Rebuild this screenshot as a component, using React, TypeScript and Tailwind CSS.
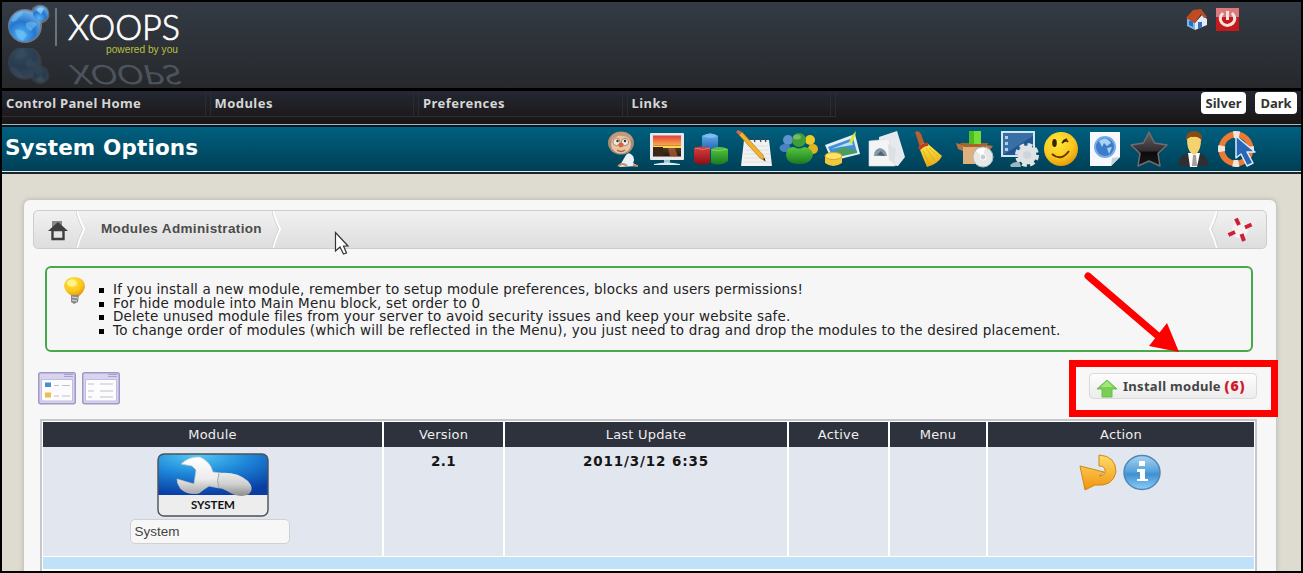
import type { ReactNode } from "react";

const Ico = ({ children, s = 36 }: { children: ReactNode; s?: number }) => (
  <svg width={s} height={s} viewBox="0 0 36 36" className="shrink-0 overflow-visible">{children}</svg>
);

const Defs = () => (
  <svg width="0" height="0" className="absolute">
    <defs>
      <radialGradient id="ball" cx=".4" cy=".8" r=".8"><stop offset="0" stopColor="#54b6f5" /><stop offset=".55" stopColor="#2576cf" /><stop offset="1" stopColor="#6fb2ea" /></radialGradient>
      <linearGradient id="sunset" x2="0" y2="1"><stop offset="0" stopColor="#e0403c" /><stop offset=".45" stopColor="#fba44a" /><stop offset=".55" stopColor="#5a3a1c" /><stop offset="1" stopColor="#1c1c18" /></linearGradient>
      <linearGradient id="blue" x2="0" y2="1"><stop offset="0" stopColor="#6cb4ee" /><stop offset="1" stopColor="#2263b4" /></linearGradient>
      <linearGradient id="red" x2="0" y2="1"><stop offset="0" stopColor="#d84040" /><stop offset="1" stopColor="#8c0d14" /></linearGradient>
      <linearGradient id="green" x2="0" y2="1"><stop offset="0" stopColor="#58c83c" /><stop offset="1" stopColor="#187a22" /></linearGradient>
      <linearGradient id="yel" x2="0" y2="1"><stop offset="0" stopColor="#fff04c" /><stop offset="1" stopColor="#e8a410" /></linearGradient>
      <radialGradient id="face" cx=".4" cy=".3" r=".8"><stop offset="0" stopColor="#ffe83c" /><stop offset=".6" stopColor="#fbc41c" /><stop offset="1" stopColor="#d88a08" /></radialGradient>
      <linearGradient id="star" x2="0" y2="1"><stop offset="0" stopColor="#6a6264" /><stop offset=".55" stopColor="#332c30" /><stop offset=".6" stopColor="#0c0a0c" /><stop offset="1" stopColor="#1c181a" /></linearGradient>
      <linearGradient id="gold" x2="0" y2="1"><stop offset="0" stopColor="#ffdc6c" /><stop offset="1" stopColor="#f0940c" /></linearGradient>
      <linearGradient id="info" x2="0" y2="1"><stop offset="0" stopColor="#a8d4f4" /><stop offset=".45" stopColor="#5aa4dc" /><stop offset=".55" stopColor="#3f90d2" /><stop offset="1" stopColor="#8ecdf8" /></linearGradient>
      <radialGradient id="sys" cx=".35" cy="0" r="1"><stop offset="0" stopColor="#55cdf5" /><stop offset=".5" stopColor="#1d86d8" /><stop offset="1" stopColor="#0a3ea4" /></radialGradient>
      <linearGradient id="steel" x2="0" y2="1"><stop offset="0" stopColor="#fff" /><stop offset=".6" stopColor="#ececec" /><stop offset="1" stopColor="#aaa" /></linearGradient>
      <linearGradient id="grip" x2="0" y2="1"><stop offset="0" stopColor="#ececec" /><stop offset=".5" stopColor="#cfcfcf" /><stop offset="1" stopColor="#8c8c8c" /></linearGradient>
    </defs>
  </svg>
);

const Person = () => (
  <Ico>
    <ellipse cx="16" cy="12" rx="13" ry="11.500" fill="#a98a72" />
    <ellipse cx="16" cy="13" rx="10" ry="9.500" fill="#e8c4a4" />
    <path d="M4 10Q7 0 18 1Q27 2 28 10Q21 4 13 5Z" fill="#c49a78" />
    <circle cx="11.500" cy="11" r="3.600" fill="#efe9df" stroke="#a98672" /><circle cx="20" cy="11" r="3.600" fill="#efe9df" stroke="#a98672" />
    <circle cx="12.500" cy="10" r="1.200" fill="#333" /><circle cx="20" cy="10" r="1.200" fill="#333" />
    <ellipse cx="16" cy="14" rx="2.600" ry="2.300" fill="#d8633a" /><path d="M12 19q4 3 8 0" stroke="#9a6a50" fill="none" strokeWidth="1.500" />
    <path d="M14 36Q18 29 21 24Q24 20 28 25Q30 29 28 32L33 35Z" fill="#e9f0f8" /><path d="M13 35Q18 31 22 35M28 34L33 35" stroke="#c49064" strokeWidth="2" fill="none" />
  </Ico>
);
const Monitor = () => (
  <Ico>
    <rect x="1" y="2" width="34" height="27" rx="1" fill="#e6eaee" />
    <rect x="4" y="4.500" width="28" height="21" fill="url(#sunset)" /><path d="M4 15h28v2H4z" fill="#f7dc4e" /><path d="M4 16h10v9H4z" fill="#3a2816" />
    <path d="M19 17h7l3 9h-8z" fill="#c9683a" opacity=".6" /><path d="M15 29h6v3h-6z" fill="#9fc0d2" /><path d="M5 33q13-3 26 0v1H5z" fill="#dfe8ee" />
  </Ico>
);
const Cubes = () => (
  <Ico>
    <path d="M9 5q9-5 16 0v14H9z" fill="url(#blue)" /><path d="M9 5q8 4 16 0q-8-5-16 0" fill="#7cbcf2" />
    <path d="M1 17q8-3 16 0v15q-9 4-16-1z" fill="url(#red)" /><path d="M18 18q9-4 17 0v12q-8 6-17 2z" fill="url(#green)" />
    <path d="M2 17q7 3 15 0M19 19q8 2 15-1" stroke="#fff" opacity=".3" fill="none" />
  </Ico>
);
const Notes = () => (
  <Ico>
    <path d="M8 9h25l3 26H5z" fill="#f1f1f0" /><path d="M10 15h22M9 19h24M8 23h26M8 27h26M7 31h28" stroke="#d4d8dc" strokeWidth=".7" />
    <path d="M13 11q-2-5 1-5M19 11q-2-5 1-5M25 11q-2-5 1-5M30 11q-2-5 1-5" stroke="#34495c" fill="none" strokeWidth="1.300" />
    <path d="M3 4L24 27L29 30L27 24L6 1Z" fill="#f3b12c" stroke="#a4701c" strokeWidth=".6" /><path d="M3 4L0 1L2-1L6 1Z" fill="#d36a50" /><path d="M27 28L29.500 30.500L28.500 27Z" fill="#222" />
  </Ico>
);
const Group = () => (
  <Ico>
    <circle cx="8" cy="9" r="5" fill="#5d94ce" /><ellipse cx="5" cy="17" rx="5.500" ry="4" fill="#4c82c2" />
    <circle cx="30" cy="9" r="5" fill="#ecca28" /><ellipse cx="33" cy="18" rx="5" ry="5" fill="#e2b420" />
    <circle cx="19" cy="9" r="7" fill="#3f9f34" /><path d="M6 23q1-7 8-7q5 3 10 0q8 1 9 7q-1 10-14 10T6 23" fill="url(#green)" /><ellipse cx="17" cy="6" rx="4" ry="2.500" fill="#fff" opacity=".28" />
  </Ico>
);
const Photo = () => (
  <Ico>
    <path d="M1 14L31 3L36 23L8 30Z" fill="#e6eef4" /><path d="M4 16L29 7L33 21L9 27Z" fill="#4290d4" /><path d="M6 24L19 16L33 20V22L9 27Z" fill="#4a9c60" /><path d="M7 18L28 10L29 14L16 16Z" fill="#b7e0f4" />
    <path d="M25 12Q27 5 32 0Q31 8 27 13Z" fill="#d8e83c" />
    <path d="M1 25v7q8 6 17 0v-7z" fill="#f1c83c" /><ellipse cx="9.500" cy="25" rx="8.500" ry="3.500" fill="#fbe36a" stroke="#d9a623" />
  </Ico>
);
const Papers = () => (
  <Ico>
    <path d="M11 6L29 0L37 26L30 35L12 33Z" fill="#e6eaee" /><path d="M1 10L21 8L27 35H1Z" fill="#f4f4f4" stroke="#d4dade" strokeWidth=".6" /><path d="M20 13l8 5l-2 15l-5-4z" fill="#dde1e4" />
    <path d="M6 25q0-7 6-8q6 1 7 8z" fill="#8298a8" /><path d="M9 24l4-4l4 5z" fill="#4c6274" />
  </Ico>
);
const Broom = () => (
  <Ico>
    <path d="M3 1q4-2 6 2l4 11l-5 2z" fill="#ba622c" /><path d="M7 16q5-6 9-3l14 12q-4 8-15 11Q11 27 7 16" fill="url(#yel)" />
    <path d="M7 18q3-4 9-5" stroke="#bd3f23" strokeWidth="3.500" fill="none" /><path d="M11 19l6 14M14 17l9 13M17 17l10 9" stroke="#d8a41c" strokeWidth=".7" fill="none" />
  </Ico>
);
const Package = () => (
  <Ico>
    <path d="M7 14h24v19H7z" fill="#deb07c" /><path d="M0 12l7 2v6l-5-2zM31 14l6 1l-4 5h-3z" fill="#b9733c" /><path d="M4 12h28l-2 4H8z" fill="#a8642e" />
    <path d="M13 0h12v13H13z" fill="#74dc34" /><path d="M13 0h5v13h-5z" fill="#4cbc24" />
    <circle cx="27" cy="26" r="10" fill="#e6e8e8" stroke="#b4b8ba" /><path d="M27 26L20 20A9 9 0 0 1 29 17Z" fill="#fff" /><circle cx="27" cy="26" r="3" fill="#c6cccf" stroke="#fff" />
  </Ico>
);
const Settings = () => (
  <Ico>
    <rect x="1" y="0" width="34" height="26" fill="#d5e4ee" /><rect x="3" y="2" width="30" height="22" fill="#1f5790" /><path d="M3 24L33 5V2H3Z" fill="#386fa4" />
    <path d="M5 5h3v3H5zM5 11h3v3H5zM5 17h3v3H5z" fill="#b3d0e4" />
    <circle cx="27" cy="24" r="9.500" fill="#e0e3e5" stroke="#e0e3e5" strokeWidth="5" strokeDasharray="4.500 3" /><circle cx="27" cy="24" r="4" fill="#cfd6da" /><path d="M10 34q5-5 10-2l1 4H11z" fill="#9fb4be" />
  </Ico>
);
const Smile = () => (
  <Ico>
    <circle cx="18" cy="18" r="17" fill="url(#face)" /><ellipse cx="11.500" cy="12" rx="2.300" ry="4" fill="#3a2404" /><path d="M19 12q4-4 6-1M20 10l4-2" stroke="#3a2404" strokeWidth="1.800" fill="none" />
    <path d="M9 23q9 8 17-3" stroke="#5b3a08" strokeWidth="2" fill="none" />
  </Ico>
);
const Page = () => (
  <Ico>
    <path d="M3 1H33V26L24 35H3Z" fill="#f6f8fb" /><path d="M24 35L25 27L33 26Z" fill="#c9d2da" /><circle cx="18" cy="16" r="11" fill="#76aee4" /><circle cx="18" cy="16" r="9" fill="#3c7cca" />
    <path d="M12 10q7-6 12 2l-4 3l-3-3l-2 4zM20 17l5-1l-3 7z" fill="#a9d2f4" />
  </Ico>
);
const Star = () => (
  <Ico>
    <path d="M18 1L23.500 12L36 14L27 22.500L29 35L18 30L7 35L9 22.500L0 14L12.500 12Z" fill="url(#star)" stroke="#6f6d72" strokeLinejoin="round" strokeWidth="1.500" />
  </Ico>
);
const Suit = () => (
  <Ico>
    <path d="M3 35Q3 24 14 22H24Q33 24 33 35Z" fill="#2f2e31" /><path d="M13 22h12l-3 14h-7z" fill="#fff" /><path d="M18 24h3l1 11h-5z" fill="#a29f98" />
    <path d="M12 8q7-6 14 0q0 10-4 14q-3 3-6 0q-4-4-4-14" fill="#f6d26c" /><path d="M11 10Q10 1 18 0Q28 0 27 10Q24 5 18 6Q13 5 11 10" fill="#8a4a14" />
  </Ico>
);
const Help = () => (
  <Ico>
    <circle cx="17" cy="18" r="14.500" fill="none" stroke="#ec7a34" strokeWidth="6" /><circle cx="17" cy="18" r="14.500" fill="none" stroke="#f1e6de" strokeWidth="7" strokeDasharray="6 16.770" strokeDashoffset="3" />
    <path d="M17 5V27L22 23L28 35L34 32L28 21H36Z" fill="#2766b8" stroke="#dfecf8" strokeWidth="1.500" strokeLinejoin="round" />
  </Ico>
);

const tools = [Person, Monitor, Cubes, Notes, Group, Photo, Papers, Broom, Package, Settings, Smile, Page, Star, Suit, Help];

const Globe = () => (
  <svg width="46" height="42" viewBox="0 0 46 42">
    <circle cx="19" cy="23" r="17" fill="#a9b3bf" opacity=".55" /><circle cx="34" cy="11" r="9.500" fill="#8793a2" opacity=".6" />
    <circle cx="18.500" cy="23" r="15.500" fill="url(#ball)" /><path d="M5 18q4-9 12-10q0 5-5 7q-2 5-7 3M20 20q7-3 11 1l-6 7q-6-2-5-8M9 27q7-2 12 5l-4 6q-7-2-8-11" fill="#7fcbf8" opacity=".5" />
    <circle cx="34.500" cy="10.500" r="7.500" fill="url(#ball)" /><path d="M30 7q4-5 8-1l-3 5z" fill="#a9def9" opacity=".7" />
  </svg>
);

const Chevron = ({ flip = false }: { flip?: boolean }) => (
  <svg width="10" height="37" viewBox="0 0 10 37" className={flip ? "-scale-x-100" : ""}>
    <path d="M1 0Q2 6 8 18Q3 28 1 37" fill="none" stroke="#fff" strokeWidth="2" /><path d="M0 0Q1 6 6.500 18Q2 28 0 37" fill="none" stroke="#cfcfcf" strokeWidth=".8" />
  </svg>
);

const ViewIcon = ({ plain = false }: { plain?: boolean }) => (
  <svg width="38" height="33" viewBox="0 0 38 33">
    <rect x=".75" y=".75" width="36.500" height="31" rx="2" fill="#d9d4ee" stroke="#9f97c6" strokeWidth="1.500" />
    <path d="M26 2.500h9M26 4.500h9" stroke="#a79fd0" /><rect x="3.500" y="7.500" width="31" height="21.500" fill="#fcfcfe" stroke="#c3bddf" />
    {plain ? <path d="M6 12h6M18 12h13M6 19h6M18 19h13M6 25h4M18 25h13" stroke="#c2c2c8" strokeWidth="1.200" /> : <>
      <rect x="7" y="10.500" width="6" height="4.500" fill="#4a8fd0" /><rect x="7" y="20.500" width="6" height="5" fill="#eebf48" /><path d="M16 13.500h5M24 13.500h8M16 24h5M24 24h8" stroke="#c0c0c6" strokeWidth="1.200" /></>}
  </svg>
);

const nav = ["Control Panel Home", "Modules", "Preferences", "Links"];
const tips = [
  "If you install a new module, remember to setup module preferences, blocks and users permissions!",
  "For hide module into Main Menu block, set order to 0",
  "Delete unused module files from your server to avoid security issues and keep your website safe.",
  "To change order of modules (which will be reflected in the Menu), you just need to drag and drop the modules to the desired placement.",
];
const heads = ["Module", "Version", "Last Update", "Active", "Menu", "Action"];
const cols = "grid grid-cols-[339px_119px_282px_99px_96px_266px] gap-x-[2px]";

export default function App() {
  return (
    <div className="relative flex h-[573px] w-[1303px] flex-col overflow-hidden border-2 border-black bg-[#dedbd0] font-['DejaVu_Sans',sans-serif]">
      <Defs />
      <header className="flex h-[86px] shrink-0 justify-between bg-linear-to-b from-[#343b45] to-[#26282b]">
        <div className="flex pl-[4px] pt-[1px]">
          <div className="w-[49px]">
            <Globe />
            <div className="mt-[3px] h-[38px] overflow-hidden opacity-20"><div className="h-[38px] -scale-y-100"><Globe /></div></div>
          </div>
          <div className="mt-[5px] h-[38px] w-[2px] bg-[#6b737d]" />
          <svg width="125" height="84" viewBox="0 0 125 84" className="ml-[9px] overflow-visible">
            <text x="2" y="37" textLength="112" lengthAdjust="spacingAndGlyphs" fontSize="36" fontWeight="300" stroke="#fff" strokeWidth=".7" fontFamily="Lato, sans-serif" fill="#fff">XOOPS</text>
            <text x="40" y="50" textLength="72" lengthAdjust="spacingAndGlyphs" fontSize="10" fontFamily="Liberation Sans, sans-serif" fill="#b9c03e">powered by you</text>
            <text x="2" y="0" transform="translate(0 62) skewX(14) scale(1 -.75)" textLength="111" lengthAdjust="spacingAndGlyphs" fontSize="36" fontFamily="Lato, sans-serif" fill="#59616b" opacity=".75">XOOPS</text>
          </svg>
        </div>
        <div className="flex gap-[8px] pr-[62px] pt-[6px]">
          <svg width="23" height="23" viewBox="0 0 23 23"><path d="M2 10L10 15V22L2 18Z" fill="#79b7ec" /><path d="M10 15L17 7L22 11V17L10 22Z" fill="#e0ecf8" /><path d="M1 10L8 2L16 1L22 9L19 10L16 6L10 15Z" fill="#c24a20" /><path d="M4 13h4v6l-4-2z" fill="#246fc0" /><path d="M13 14h4v5l-4 2z" fill="#386db8" /></svg>
          <svg width="23" height="23" viewBox="0 0 23 23"><rect width="23" height="23" fill="#c41a1c" /><rect width="23" height="9" fill="#dc797a" /><path d="M7 5Q2 10 6 15Q11 20 17 15Q21 10 16 5M11.500 3V12" stroke="#f7e3e3" strokeWidth="3" fill="none" /></svg>
        </div>
      </header>
      <nav className="flex h-[36px] shrink-0 justify-between border-t-[3px] border-black bg-linear-to-b from-[#242832] to-[#1a1515]">
        <div className="flex h-[26px]">
          {nav.map((n, i) => (
            <div key={n} className="flex w-[208.500px] items-center justify-between border-b border-[#2a2d33] pl-[4px] font-['Noto_Sans','DejaVu_Sans',sans-serif] text-[13px] font-bold text-[#d6d6d6]">
              <span className={i === 0 ? "pt-px tracking-[.32px]" : "pt-px tracking-[.45px]"}>{n}</span><i className="h-full w-[6px] border-x border-[#292c33]" />
            </div>
          ))}
        </div>
        <div className="flex gap-[9px] pr-[4px] pt-[1px] font-['Noto_Sans',sans-serif] text-[13px] font-bold leading-[22px] text-[#333]">
          <span className="h-[22px] w-[45px] rounded-[4px] bg-white text-center">Silver</span>
          <span className="h-[22px] w-[42px] rounded-[4px] bg-white text-center">Dark</span>
        </div>
      </nav>
      <div className="h-[1px] shrink-0 bg-[#a7b6bd]" />
      <section className="flex h-[46px] shrink-0 items-center border-t-2 border-[#051620] bg-linear-to-b from-[#00607f] to-[#004057]">
        <h1 className="-mt-[3px] w-[599px] pl-[3px] text-[21.500px] font-bold leading-none tracking-[.14px] text-white">System Options</h1>
        <div className="flex">
          {tools.map((T, i) => <div key={i} className="flex w-[43.850px] justify-center"><T /></div>)}
        </div>
      </section>
      <div className="h-[3px] shrink-0 border-b-2 border-b-[#17242a] bg-[#e6e9e8]" />

      <main className="ml-[21px] mt-[25px] flex w-[1254px] flex-1 flex-col rounded-t-[7px] border border-[#c9c8c4] bg-[#f7f7f8] px-[9px] pt-[10px] shadow-[0_0_4px_#bdbbb3]">
        <div className="flex h-[39px] shrink-0 items-center rounded-[5px] border border-[#cdcdcd] bg-linear-to-b from-[#f1f1f1] to-[#dedede] font-['Liberation_Sans',sans-serif]">
          <svg width="20" height="20" viewBox="0 0 20 20" className="ml-[14px] mr-[8px] mt-[2px]"><path d="M4 0h10v6H4z" fill="#888" /><path d="M10 1L0 10H20Z" fill="#3e3e3e" /><path d="M4.500 9h11v9h-11z" fill="#e4e4e4" stroke="#3e3e3e" strokeWidth="2.400" /></svg>
          <Chevron />
          <span className="ml-[15px] w-[171px] text-[13.500px] font-bold tracking-[.35px] text-[#4b4b4b]">Modules Administration</span>
          <Chevron />
          <div className="flex-1" />
          <Chevron flip />
          <svg width="26" height="26" viewBox="0 0 26 26" className="ml-[9px] mr-[13px]"><circle cx="13" cy="13" r="8" fill="#f6f2f2" /><path d="M9 1.500L12 8M24.500 7.500L18 10.500M17 24L14.500 17M1.500 18L8 15" stroke="#cb2039" strokeWidth="4" /></svg>
        </div>
        <div className="ml-[12px] mt-[17px] flex h-[86px] w-[1208px] shrink-0 rounded-[6px] border-2 border-[#46a94b] bg-[#f6f6f7] pl-[17px] pt-[9px]">
          <svg width="22" height="28" viewBox="0 0 22 28"><path d="M0 9Q1 0 11 0Q21 1 21 10Q20 15 15 19H8Q1 15 0 9" fill="url(#face)" /><ellipse cx="8" cy="6" rx="5" ry="3.500" fill="#fff8a8" opacity=".8" /><path d="M7 18h8l-1 7l-4 2l-3-2z" fill="#8a8a8a" /><path d="M8 20l6 1M8 23l5 1" stroke="#ddd" /></svg>
          <ul className="mt-[6px] pl-[13px] text-[13.500px] leading-[13.500px] text-[#222]">
            {tips.map((t, i) => (
              <li key={i} className="flex h-[13.500px] items-center whitespace-nowrap"><i className="mt-[2px] mr-[9px] h-[5px] w-[5px] bg-black" /><span className="tracking-[.18px]">{t}</span></li>
            ))}
          </ul>
        </div>
        <div className="mt-[20px] flex h-[47px] shrink-0 justify-between pl-[5px] pr-[10px]">
          <div className="flex gap-[6px]"><ViewIcon /><ViewIcon plain /></div>
          <button className="mt-[1px] flex h-[26px] w-[168px] items-center rounded-[4px] border border-[#dadada] bg-linear-to-b from-[#fdfdfd] to-[#ececec] pl-[7px] font-['Noto_Sans',sans-serif] text-[13px] font-bold text-[#444]">
            <svg width="20" height="19" viewBox="0 0 20 19" className="mr-[6px] mt-[4px]"><path d="M10 1L20 10H15V18H5V10H0Z" fill="#79cf50" stroke="#6cba5a" /><path d="M10 2L16 8H4Z" fill="#a2e67c" /></svg>
            <span className="whitespace-nowrap tracking-[.3px]">Install module <b className="text-[14px] tracking-[.8px] text-[#cf1a2c]">(6)</b></span>
          </button>
        </div>
        <div className="ml-[7px] w-[1217px] shrink-0 border-2 border-b-0 border-[#c4c8cc] bg-white pl-[1px] pt-[1px]">
          <div className={`${cols} h-[23px]`}>
            {heads.map((h) => <div key={h} className="bg-[#2e323c] text-center text-[13px] leading-[25px] tracking-[.2px] text-[#eee]">{h}</div>)}
          </div>
          <div className={`${cols} mt-[2px] h-[109px] text-center text-[13.500px] font-bold leading-[17px] text-[#151515] *:bg-[#e2e6ef] *:pt-[6px]`}>
            <div className="flex flex-col items-center">
              <svg width="112" height="64" viewBox="0 0 112 64" className="block shrink-0">
                <rect x="1" y="1" width="110" height="62" rx="6" fill="#ededed" /><path d="M1 42V7Q1 1 7 1H105Q111 1 111 7V42Z" fill="url(#sys)" />
                <path d="M24 11Q32 3 43 4Q53 8 56 19L64 20L62 35L52 33Q47 36 42 40Q31 42 24 36Q20 31 20 26L37 31L39 17L35 13Z" fill="url(#steel)" stroke="#c4c4c4" strokeWidth=".7" />
                <path d="M61 20Q80 18 91 28Q98 36 92 41Q82 46 70 38Q65 35 61 35Z" fill="url(#grip)" /><path d="M62 20Q59 28 62 35" stroke="#a7a7a7" fill="none" />
                <rect x="1" y="1" width="110" height="62" rx="6" fill="none" stroke="#4c5157" strokeWidth="1.400" />
                <text x="34" y="56" fontSize="12" fontWeight="700" textLength="44" lengthAdjust="spacingAndGlyphs" fontFamily="Lato, sans-serif" fill="#111">SYSTEM</text>
              </svg>
              <div className="mt-[2px] h-[25px] w-[160px] shrink-0 -translate-x-[3px] rounded-[5px] border border-[#d0d0d4] bg-[#f7f7f8] pl-[4px] text-left font-['Liberation_Sans',sans-serif] text-[13.500px] font-normal leading-[23px] text-[#444]">System</div>
            </div>
            <div className="tracking-[.3px]">2.1</div><div className="tracking-[.850px]">2011/3/12 6:35</div><div /><div />
            <div className="flex justify-center gap-[5px] pr-[2px]">
              <svg width="39" height="38" viewBox="0 0 39 38" className="mt-[1px]"><path d="M20 1Q37 2 37 18Q34 33 16 31L6 36L1 12L25 18L20 22Q27 22 26 15Q24 11 20 12Z" fill="url(#gold)" stroke="#cf8718" /></svg>
              <svg width="38" height="38" viewBox="0 0 38 38" className="mt-[1px]"><ellipse cx="19" cy="18.500" rx="18" ry="17" fill="url(#info)" stroke="#5087b4" strokeWidth="1.500" /><path d="M16 7h6v5h-6zM14 15h8v10h3v2H14v-2h3v-7h-3z" fill="#fff" /></svg>
            </div>
          </div>
          <div className="mt-[1px] h-[12px] w-[1211px] bg-[#bfe2f8]" />
          <div className="h-[8px]" />
        </div>
      </main>

      <svg width="16" height="25" viewBox="0 0 16 25" className="absolute left-[332px] top-[229px]"><path d="M1.500 1.500V20L6 16L9.500 23L12.500 22L9.500 15H14Z" fill="#fff" stroke="#333" strokeWidth="1.200" /></svg>
      <div className="absolute left-[1067px] top-[358px] h-[57px] w-[209px] border-[7px] border-[#fe0000]" />
      <svg width="100" height="84" viewBox="0 0 100 84" className="absolute left-[1081px] top-[269px]"><path d="M5 5L75 65" stroke="#fe0000" strokeWidth="7" strokeLinecap="round" /><path d="M96 81L66 75L84 52Z" fill="#fe0000" /></svg>
    </div>
  );
}
